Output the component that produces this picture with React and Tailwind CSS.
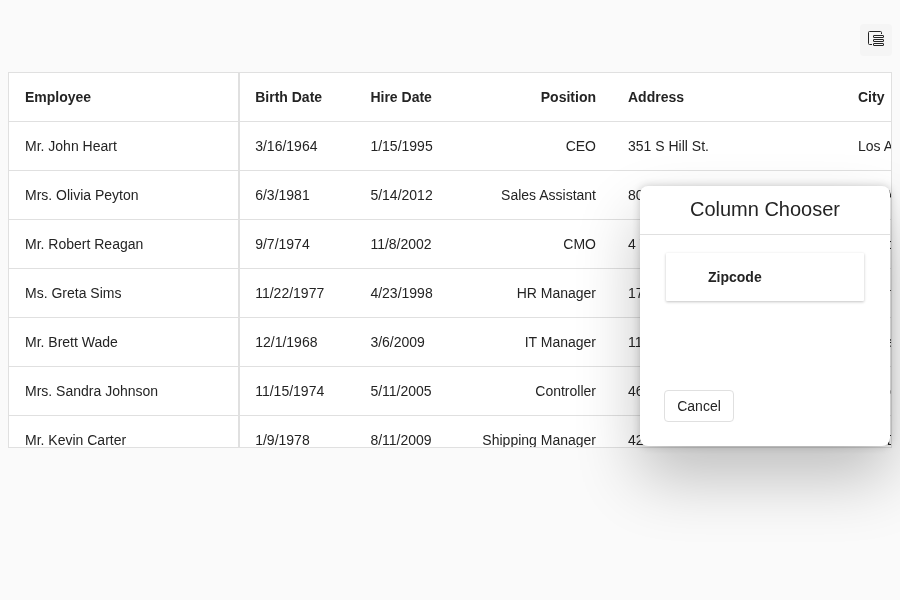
const employees = [
  ['Mr. John Heart', '3/16/1964', '1/15/1995', 'CEO', '351 S Hill St.', 'Los Angeles'],
  ['Mrs. Olivia Peyton', '6/3/1981', '5/14/2012', 'Sales Assistant', '807 W Paseo Del Mar', 'Los Angeles'],
  ['Mr. Robert Reagan', '9/7/1974', '11/8/2002', 'CMO', '4 Westmoreland Pl.', 'Bentonville'],
  ['Ms. Greta Sims', '11/22/1977', '4/23/1998', 'HR Manager', '1700 S Grandview Dr.', 'Atlanta'],
  ['Mr. Brett Wade', '12/1/1968', '3/6/2009', 'IT Manager', '1120 Old Mill Rd.', 'Boise'],
  ['Mrs. Sandra Johnson', '11/15/1974', '5/11/2005', 'Controller', '4600 N Virginia Rd.', 'Beaver'],
  ['Mr. Kevin Carter', '1/9/1978', '8/11/2009', 'Shipping Manager', '424 N Main St.', 'San Diego'],
];

const headers = ['Employee', 'Birth Date', 'Hire Date', 'Position', 'Address', 'City'];

const cellStyles = [
  'w-[231px] border-r-2 border-[#e0e0e0] pl-4',
  'w-[115px] pl-[15.2px]',
  'w-[108px] pl-[15.4px]',
  'w-[149px] pr-4 text-right',
  'w-[230px] pl-4',
  'w-[230px] pl-4',
];

function Row({ cells, header = false }) {
  return (
    <div className={header ? 'flex h-[49px] w-[1063px] font-bold' : 'flex h-[49px] w-[1063px]'}>
      {cells.map((text, i) => (
        <div key={i} className={`shrink-0 whitespace-nowrap border-b border-b-[#e0e0e0] pt-[14px] leading-5 ${cellStyles[i]}`}>
          {text}
        </div>
      ))}
    </div>
  );
}

function ColumnChooserIcon() {
  return (
    <svg width="20" height="20" viewBox="0 0 20 20" fill="none" stroke="#242424">
      <path d="M15.5 5V3.5A1 1 0 0 0 14.5 2.5H3.5A1 1 0 0 0 2.5 3.5V14.5A1 1 0 0 0 3.5 15.5H6" />
      <rect x="7.5" y="6.5" width="10" height="2" rx="0.3" />
      <rect x="7.5" y="10.5" width="10" height="2" rx="0.3" />
      <rect x="7.5" y="14.5" width="10" height="2" rx="0.3" />
    </svg>
  );
}

export default function App() {
  return (
    <div className="relative h-[600px] w-[900px] overflow-hidden bg-[#fafafa] px-2 pt-6 font-['Liberation_Sans',Arial,sans-serif] text-sm text-[#242424] will-change-transform">
      <div className="mb-4 flex justify-end">
        <button className="flex h-8 w-8 items-center justify-center rounded bg-[#f5f5f5] pb-0.5" aria-label="Column Chooser">
          <ColumnChooserIcon />
        </button>
      </div>
      <div className="h-[376px] overflow-hidden border border-[#e0e0e0] bg-white">
        <Row cells={headers} header />
        {employees.map((cells) => (
          <Row key={cells[0]} cells={cells} />
        ))}
      </div>
      <div className="absolute left-[640px] top-[186px] flex h-[260px] w-[250px] flex-col rounded-lg bg-white shadow-[0_0_8px_rgba(0,0,0,0.2),0_32px_64px_rgba(0,0,0,0.24)]">
        <h2 className="h-[49px] border-b border-[#e0e0e0] pt-[9px] text-center text-xl leading-7">Column Chooser</h2>
        <div className="flex flex-1 flex-col items-start justify-between px-6 pb-6 pt-[18px]">
          <div className="ml-0.5 h-12 w-[198px] rounded-[1px] bg-white pl-[42px] pt-[14px] font-bold leading-5 shadow-[0_1px_3px_rgba(0,0,0,0.24)]">
            Zipcode
          </div>
          <button className="h-8 w-[70px] rounded border border-[#e0e0e0] bg-white text-sm">Cancel</button>
        </div>
      </div>
    </div>
  );
}
